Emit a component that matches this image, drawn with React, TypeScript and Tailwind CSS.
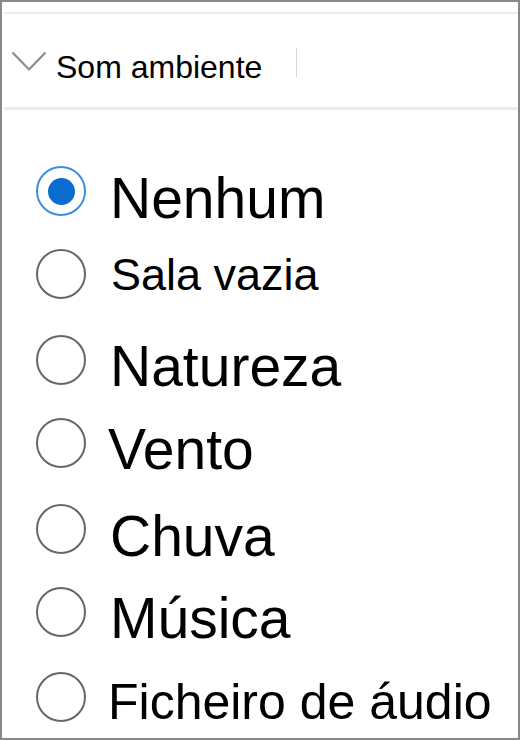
import React from "react";

type Item = { label: string; size: string; rowH: string; mt: string; gap: string; selected?: boolean };

const items: Item[] = [
  { label: "Nenhum", size: "text-[57px]", rowH: "h-[83px]", mt: "mt-[4px]", gap: "ml-[24px]", selected: true },
  { label: "Sala vazia", size: "text-[45px]", rowH: "h-[86px]", mt: "mt-[3px]", gap: "ml-[25px]" },
  { label: "Natureza", size: "text-[57px]", rowH: "h-[83px]", mt: "mt-[3px]", gap: "ml-[24px]" },
  { label: "Vento", size: "text-[57px]", rowH: "h-[86px]", mt: "mt-[3px]", gap: "ml-[22px]" },
  { label: "Chuva", size: "text-[57px]", rowH: "h-[83px]", mt: "mt-[4px]", gap: "ml-[24px]" },
  { label: "Música", size: "text-[57px]", rowH: "h-[85px]", mt: "mt-[3px]", gap: "ml-[24px]" },
  { label: "Ficheiro de áudio", size: "text-[50px]", rowH: "h-[60px]", mt: "mt-[5px]", gap: "ml-[22px]" },
];

function Radio({ selected }: { selected?: boolean }) {
  if (selected) {
    return (
      <div className="w-[50px] h-[50px] shrink-0 rounded-full border-2 border-[#3a90e0] flex items-center justify-center">
        <div className="w-[27px] h-[27px] rounded-full bg-[#0a6cce]" />
      </div>
    );
  }
  return <div className="w-[50px] h-[50px] shrink-0 rounded-full border-2 border-[#676767]" />;
}

export default function App() {
  return (
    <div className="w-[520px] h-[740px] overflow-hidden border-2 border-[#888888] bg-white font-['Liberation_Sans',Arial,sans-serif] text-black">
      <div className="mt-[10px] ml-[2px] h-[2px] bg-[#ebebeb]" />
      <div className="flex items-start h-[93px]">
        <svg className="ml-[9px] mt-[37px] shrink-0" width="36" height="21" viewBox="0 0 36 21" fill="none">
          <polyline points="1.5,1.5 18,18.5 34.5,1.5" stroke="#8c8c8c" strokeWidth="2.2" fill="none" />
        </svg>
        <div className="ml-[9px] mt-[37px] w-[240px] shrink-0 text-[32px] leading-none">Som ambiente</div>
        <div className="mt-[34px] w-px h-[29px] bg-[#d6d6d6]" />
      </div>
      <div className="ml-[2px] h-[3px] bg-[#ececec]" />
      <div className="mt-[56px] flex flex-col">
        {items.map((it) => (
          <div key={it.label} className={`flex items-start ${it.rowH}`}>
            <div className="ml-[34px]">
              <Radio selected={it.selected} />
            </div>
            <div className={`${it.gap} ${it.mt} ${it.size} leading-none whitespace-nowrap`}>{it.label}</div>
          </div>
        ))}
      </div>
    </div>
  );
}
